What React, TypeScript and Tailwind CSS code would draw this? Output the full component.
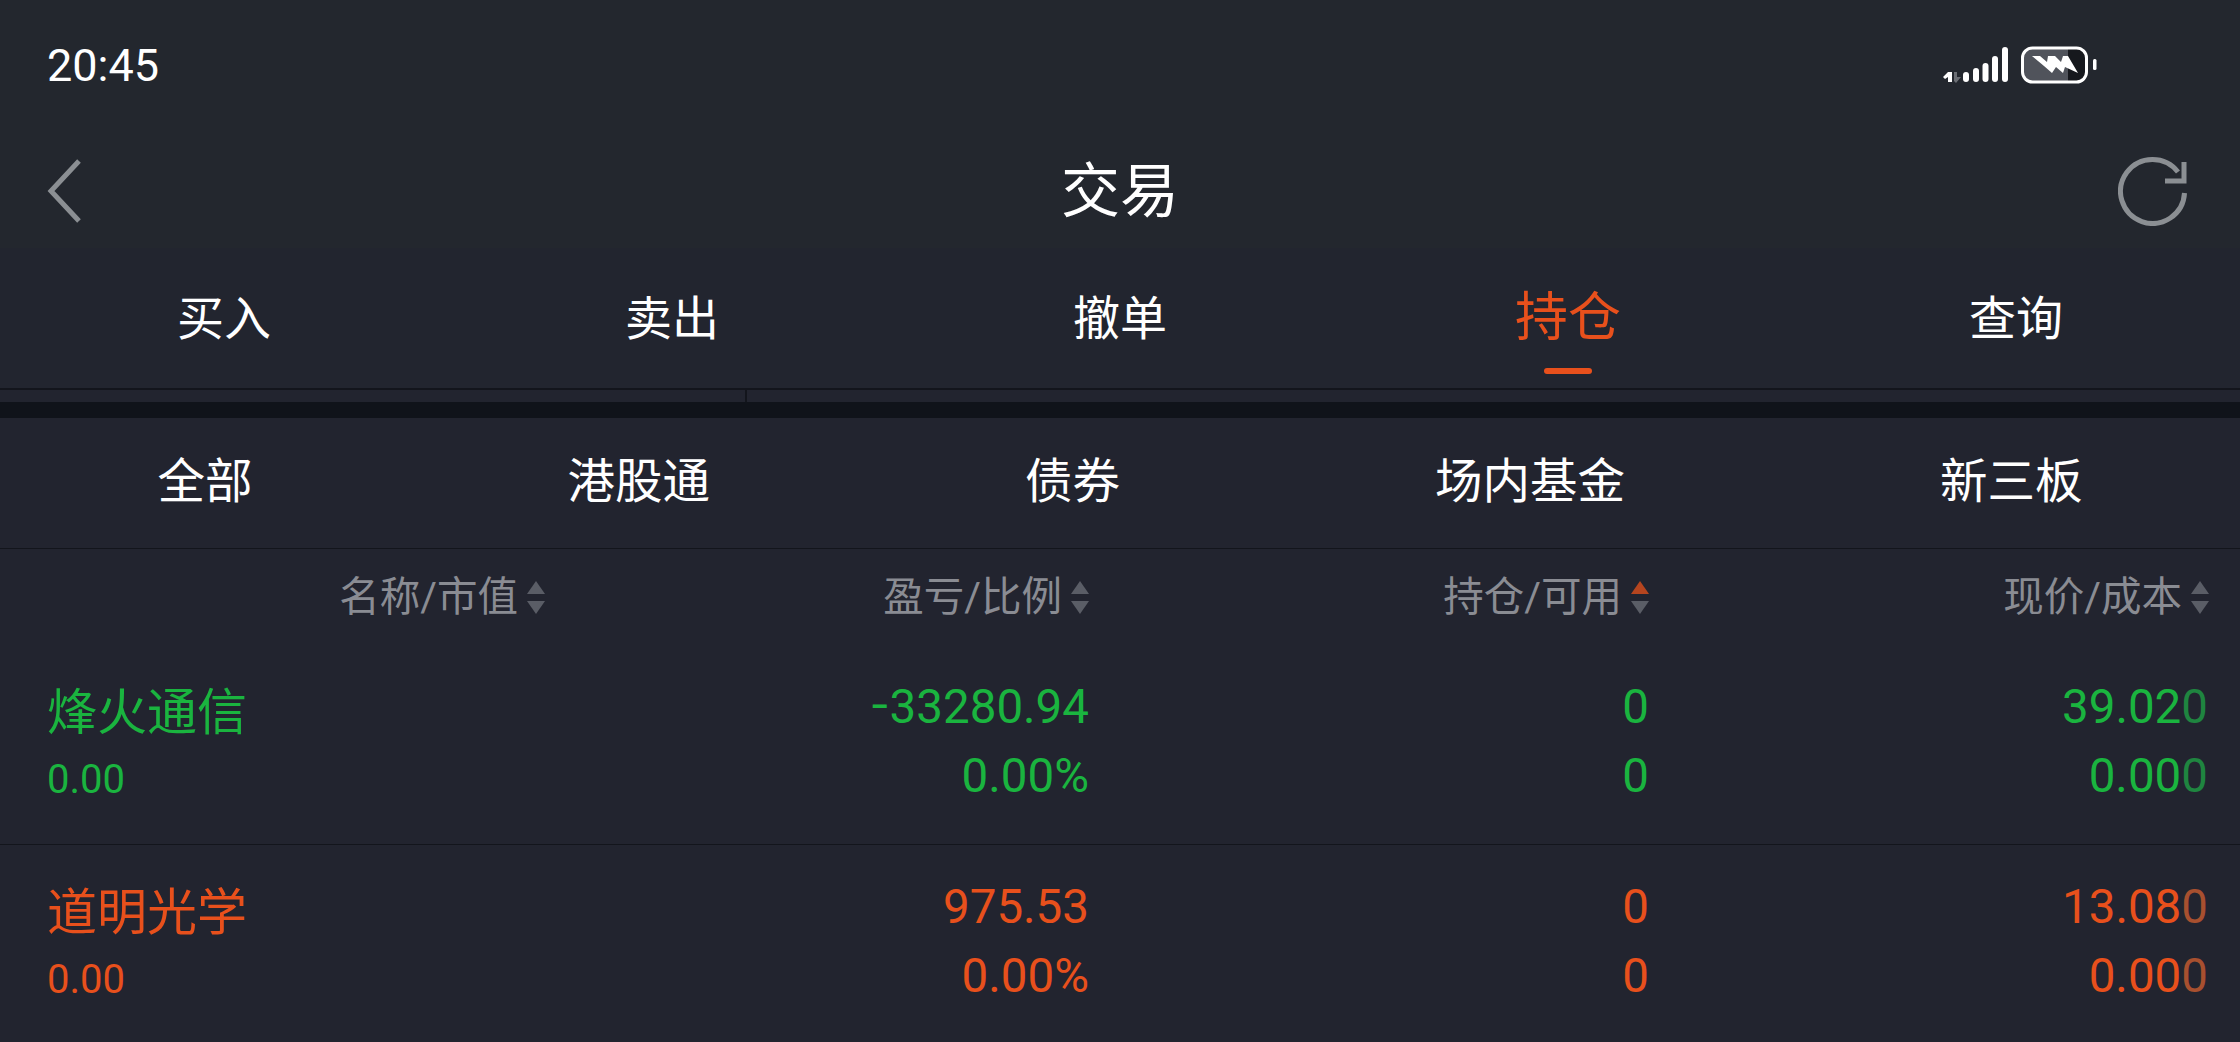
const cjk = "font-['Roboto','Noto_Sans_CJK_SC',sans-serif]";

const mainTabs = ["买入", "卖出", "撤单", "持仓", "查询"];
const subTabs = ["全部", "港股通", "债券", "场内基金", "新三板"];

const columns = [
  { label: "名称/市值", up: "#5a5d66" },
  { label: "盈亏/比例", up: "#5a5d66" },
  { label: "持仓/可用", up: "#b5451f" },
  { label: "现价/成本", up: "#5a5d66" },
];

const rows = [
  {
    name: "烽火通信",
    cap: "0.00",
    negative: true,
    pnl: "33280.94",
    price: "39.02",
    text: "text-[#1ab43f]",
    fade: "text-[#1f8540]",
  },
  {
    name: "道明光学",
    cap: "0.00",
    negative: false,
    pnl: "975.53",
    price: "13.08",
    text: "text-[#e8501c]",
    fade: "text-[#a8502f]",
  },
];

function SignalIcon() {
  return (
    <svg width="154" height="38" viewBox="0 0 154 38" fill="none" className="mb-[2px]">
      <path d="M0 31 L5 26 L9 26 L9 36 L5 36 L5 31 L2 33 Z" fill="#fff" />
      <path d="M11 26 h3 v5 h4 l-5 6 l-2 -2 Z" fill="#6b6e74" />
      {[
        [20, 26],
        [30, 22],
        [39.5, 17],
        [49, 10],
        [59, 1],
      ].map(([x, y]) => (
        <rect key={x} x={x} y={y} width="6" height={36 - y} rx="3" fill="#fff" />
      ))}
      <rect x="79.5" y="2" width="64" height="34" rx="10" fill="#16181d" />
      <path d="M79.5 12 a10 10 0 0 1 10 -10 h35.5 v34 h-35.5 a10 10 0 0 1 -10 -10 Z" fill="#50535b" />
      <rect x="79.5" y="2" width="64" height="34" rx="10" stroke="#fff" strokeWidth="3" />
      <path
        d="M89 10 L97 10 L104 16 L105 10 L112 10 L118 16 L120 10 L125 10 L135 27 L122 21 L120 27 L113 21 L109 27 L101 20 Z"
        fill="#fff"
      />
      <rect x="150" y="13" width="3.5" height="11" rx="1.5" fill="#fff" />
    </svg>
  );
}

function SortArrows({ up }: { up: string }) {
  return (
    <svg width="18" height="34" viewBox="0 0 18 34" className="ml-[9px] shrink-0">
      <path d="M9 1 L18 14 H0 Z" fill={up} />
      <path d="M0 21 H18 L9 34 Z" fill="#5a5d66" />
    </svg>
  );
}

export default function App() {
  return (
    <div className={`h-[1042px] w-[2240px] overflow-hidden bg-[#22242f] text-white ${cjk}`}>
      <div className="bg-[#23272e]">
        {/* status bar */}
        <div className="flex h-[132px] items-center justify-between pl-[47px] pr-[143px]">
          <span className="mb-[2px] text-[45px] leading-none">20:45</span>
          <SignalIcon />
        </div>

        {/* title bar */}
        <div className="relative flex h-[116px] items-center justify-center">
          <svg width="36" height="66" viewBox="0 0 36 66" fill="none" className="absolute left-[46px] top-[26px]">
            <path d="M33 3 L5 33 L33 63" stroke="#8b8f93" strokeWidth="5" />
          </svg>
          <span className="mt-[2px] text-[59px] leading-none">交易</span>
          <svg width="70" height="70" viewBox="0 0 70 70" fill="none" className="absolute left-[2118px] top-[24px]">
            <path d="M66.5 37 A32 32 0 1 1 60 16" stroke="#8b8f93" strokeWidth="5" />
            <path d="M66 6 V25 H47" stroke="#8b8f93" strokeWidth="5" />
          </svg>
        </div>
      </div>

      {/* main tabs */}
      <div className="flex h-[140px] bg-[#22252f]">
        {mainTabs.map((tab) => (
          <div key={tab} className="relative flex flex-1 items-center justify-center">
            {tab === "持仓" ? (
              <>
                <span className="text-[53px] leading-none text-[#e8501c]">{tab}</span>
                <div className="absolute bottom-[14px] h-[6px] w-[48px] rounded-full bg-[#e8501c]" />
              </>
            ) : (
              <span className="text-[47px] leading-none">{tab}</span>
            )}
          </div>
        ))}
      </div>
      <div className="h-[2px] bg-[#13151c]" />
      <div className="h-[12px] pl-[745px]">
        <div className="h-full w-[2px] bg-[#13151c]" />
      </div>
      <div className="h-[16px] bg-[#10131a]" />

      {/* sub tabs */}
      <div className="flex h-[131px] items-center justify-around border-b border-[#13151c]">
        {subTabs.map((tab) => (
          <span key={tab} className="text-[47.5px] leading-none">
            {tab}
          </span>
        ))}
      </div>

      {/* table head */}
      <div className="grid h-[96px] grid-cols-[545px_544px_560px_560px] items-center">
        {columns.map((col) => (
          <div key={col.label} className="flex items-center justify-end">
            <span className="text-[40.5px] leading-none text-[#8a8c93]">{col.label}</span>
            <SortArrows up={col.up} />
          </div>
        ))}
      </div>

      {/* positions */}
      {rows.map((row, i) => (
        <div
          key={row.name}
          className={`grid h-[200px] grid-cols-[546px_543px_560px_559px] border-[#13151c] ${row.text} ${
            i === 0 ? "border-b" : ""
          }`}
        >
          <div className="flex flex-col pl-[47px] pt-[43px]">
            <span className="text-[50px] leading-[50px]">{row.name}</span>
            <span className="mt-[22px] text-[40px] leading-[40px]">{row.cap}</span>
          </div>
          <div className="flex flex-col items-end gap-[21px] pt-[38px] text-[47.5px] leading-[48px]">
            <span>
              {row.negative && <span className="inline-block origin-right scale-x-[0.6]">–</span>}
              {row.pnl}
            </span>
            <span>0.00%</span>
          </div>
          <div className="flex flex-col items-end gap-[21px] pt-[38px] text-[47.5px] leading-[48px]">
            <span>0</span>
            <span>0</span>
          </div>
          <div className="flex flex-col items-end gap-[21px] pt-[38px] text-[47.5px] leading-[48px]">
            <span>
              {row.price}
              <span className={row.fade}>0</span>
            </span>
            <span>
              0.00<span className={row.fade}>0</span>
            </span>
          </div>
        </div>
      ))}
    </div>
  );
}
